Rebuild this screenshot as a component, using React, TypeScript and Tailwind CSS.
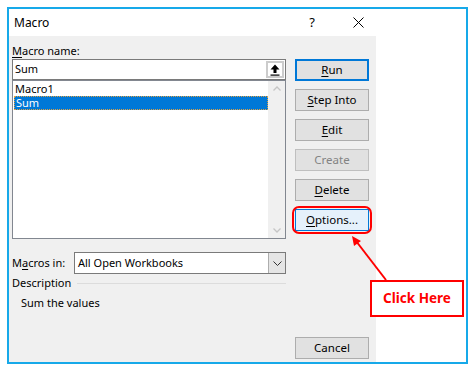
import React from "react";

const font = { fontFamily: '"Segoe UI", "Noto Sans", Arial, sans-serif' };

const Btn = ({
  children,
  variant = "normal",
  className = "",
}: {
  children: React.ReactNode;
  variant?: "normal" | "default" | "disabled" | "focus";
  className?: string;
}) => {
  const styles = {
    normal: "border border-[#adadad] bg-[#e1e1e1] text-black",
    default: "border-2 border-[#0078d7] bg-[#e1e1e1] text-black",
    disabled: "border border-[#bfbfbf] bg-[#e1e1e1] text-[#838383]",
    focus: "border border-[#0078d7] bg-[#e5f1fb] text-black",
  }[variant];
  return (
    <div
      className={`flex h-[22px] w-[74px] items-center justify-center text-[11.5px] leading-none ${styles} ${className}`}
    >
      {children}
    </div>
  );
};

const U = ({ children }: { children: React.ReactNode }) => <span className="underline underline-offset-2">{children}</span>;

export default function App() {
  return (
    <div className="relative h-[372px] w-[475px] bg-white pl-[7px] pt-[7px]" style={font}>
      <div className="flex h-[357px] w-[461px] flex-col border-2 border-[#17a9e9] bg-white">
        {/* title bar */}
        <div className="flex h-[27px] shrink-0 items-center text-[12px] text-black">
          <span className="pl-[5px]">Macro</span>
          <span className="ml-auto mr-[38px] text-[13px]">?</span>
          <svg width="11" height="11" viewBox="0 0 11 11" className="mr-[102px]">
            <path d="M0.5 0.5 L10.5 10.5 M10.5 0.5 L0.5 10.5" stroke="#000" strokeWidth="1" />
          </svg>
        </div>

        <div className="flex flex-1">
          {/* gray panel */}
          <div className="flex w-[367px] bg-[#f0f0f0] pl-[3px] pt-[6px]">
            <div className="flex w-[274px] flex-col text-[11px] text-black">
              <div className="h-[17px] pt-[1px] leading-[15px]">
                <U>M</U>acro name:
              </div>
              <div className="flex h-[21px] items-center border border-[#7a7a7a] bg-white pl-[2px]">
                <span>Sum</span>
                <div className="ml-auto mr-[1px] flex h-[17px] w-[18px] items-center justify-center border-2 border-[#cccccc] bg-white">
                  <svg width="10" height="12" viewBox="0 0 10 12">
                    <path d="M5 0.5 L9.5 5.5 L6.5 5.5 L6.5 9 L3.5 9 L3.5 5.5 L0.5 5.5 Z" fill="#000" />
                    <rect x="0.5" y="10.5" width="9" height="1.2" fill="#000" />
                  </svg>
                </div>
              </div>
              <div className="flex h-[159px] border border-[#828790] bg-white">
                <div className="flex flex-1 flex-col pl-[1px]">
                  <div className="h-[15px] pl-[1px] leading-[15px]">Macro1</div>
                  <div className="flex h-[14px] items-center border border-dotted border-[#e0a040] bg-[#0078d7] pl-[1px] text-white">
                    Sum
                  </div>
                </div>
                <div className="flex w-[17px] flex-col items-center justify-between bg-[#f0f0f0] py-[5px]">
                  <svg width="8" height="5" viewBox="0 0 8 5">
                    <path d="M0.5 4.5 L4 1 L7.5 4.5" fill="none" stroke="#c5c5c5" strokeWidth="1.3" />
                  </svg>
                  <svg width="8" height="5" viewBox="0 0 8 5">
                    <path d="M0.5 0.5 L4 4 L7.5 0.5" fill="none" stroke="#c5c5c5" strokeWidth="1.3" />
                  </svg>
                </div>
              </div>

              <div className="mt-[13px] flex items-center">
                <span className="w-[62px]">
                  M<U>a</U>cros in:
                </span>
                <div className="flex h-[22px] flex-1 items-center border border-[#7a7a7a] bg-white pl-[3px]">
                  <span>All Open Workbooks</span>
                  <div className="ml-auto flex h-full w-[17px] items-center justify-center border-l border-[#adadad] bg-[#e5e5e5]">
                    <svg width="9" height="5" viewBox="0 0 9 5">
                      <path d="M0.5 0.5 L4.5 4.5 L8.5 0.5" fill="none" stroke="#333" strokeWidth="1" />
                    </svg>
                  </div>
                </div>
              </div>

              <div className="mt-[1px] flex items-center">
                <span>Description</span>
                <div className="ml-[6px] h-px flex-1 bg-[#dcdcdc]" />
              </div>
              <div className="mt-[3px] pl-[9px]">Sum the values</div>
            </div>

            {/* buttons */}
            <div className="ml-[9px] flex flex-col pb-[3px] pt-[17px]">
              <div className="flex flex-col gap-[8px]">
                <Btn variant="default">
                  <U>R</U>un
                </Btn>
                <Btn>
                  <U>S</U>tep Into
                </Btn>
                <Btn>
                  <U>E</U>dit
                </Btn>
                <Btn variant="disabled">Create</Btn>
                <Btn>
                  <U>D</U>elete
                </Btn>
                <div className="rounded-[4px] outline-2 outline-[#ff0000] outline-offset-[1px]">
                  <Btn variant="focus">
                    <U>O</U>ptions...
                  </Btn>
                </div>
              </div>
              <Btn className="mt-auto">Cancel</Btn>
            </div>
          </div>
          <div className="flex-1 bg-white" />
        </div>
      </div>

      {/* annotation */}
      <svg className="absolute left-0 top-0" width="475" height="372" viewBox="0 0 475 372">
        <line x1="386" y1="280" x2="356" y2="241" stroke="#ff0000" strokeWidth="2" />
        <path d="M352 236 L361 241 L354 246 Z" fill="#ff0000" />
      </svg>
      <div className="absolute left-[370px] top-[280px] flex h-[37px] w-[94px] items-center justify-center border-2 border-[#ff0000] bg-white text-[13.5px] font-bold text-[#ff0000]">
        Click Here
      </div>
    </div>
  );
}
